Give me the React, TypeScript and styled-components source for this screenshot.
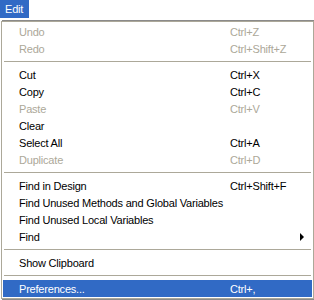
import React from 'react'
import styled, { createGlobalStyle } from 'styled-components'

const GlobalStyle = createGlobalStyle`
  html, body {
    margin: 0;
    padding: 0;
    background: #ffffff;
    overflow: hidden;
  }
  body {
    font-family: "Liberation Sans", Arial, sans-serif;
    font-size: 11px;
    letter-spacing: -0.2px;
  }
`;

const Page = styled.div`
  width: 314px;
  height: 300px;
  display: flex;
  flex-direction: column;
`;

const MenuBar = styled.div`
  display: flex;
  height: 18px;
`;

const BarItem = styled.div`
  height: 18px;
  line-height: 18px;
  padding: 0 5px;
  width: 19px;
  background: #316ac5;
  color: #ffffff;
`;

const Dropdown = styled.div`
  margin: 3px 0 0 1px;
  width: 309px;
  border: 1px solid #aca899;
  padding: 1px 1px;
  background: #ffffff;
  box-shadow: 2px 0 0 #ffffff, 2px 0 0 1px #8a8a8a;
  display: flex;
  flex-direction: column;
`;

const Row = styled.div<{ $disabled?: boolean; $active?: boolean }>`
  display: grid;
  grid-template-columns: 211px 1fr 14px;
  align-items: center;
  height: 17px;
  padding-left: 16px;
  white-space: nowrap;
  color: ${p => (p.$active ? '#ffffff' : p.$disabled ? '#aca899' : '#000000')};
  background: ${p => (p.$active ? '#316ac5' : 'transparent')};
`;

const Label = styled.span`
  overflow: visible;
`;

const Shortcut = styled.span``;

const Arrow = styled.span`
  width: 0;
  height: 0;
  margin-left: 2px;
  border-top: 4px solid transparent;
  border-bottom: 4px solid transparent;
  border-left: 4px solid #000000;
  justify-self: start;
`;

const Separator = styled.div`
  height: 1px;
  margin: 4px 1px 4px 1px;
  background: #aca899;
`;

type Item = { label: string; shortcut?: string; disabled?: boolean; active?: boolean; submenu?: boolean } | 'sep';

const items: Item[] = [
  { label: 'Undo', shortcut: 'Ctrl+Z', disabled: true },
  { label: 'Redo', shortcut: 'Ctrl+Shift+Z', disabled: true },
  'sep',
  { label: 'Cut', shortcut: 'Ctrl+X' },
  { label: 'Copy', shortcut: 'Ctrl+C' },
  { label: 'Paste', shortcut: 'Ctrl+V', disabled: true },
  { label: 'Clear' },
  { label: 'Select All', shortcut: 'Ctrl+A' },
  { label: 'Duplicate', shortcut: 'Ctrl+D', disabled: true },
  'sep',
  { label: 'Find in Design', shortcut: 'Ctrl+Shift+F' },
  { label: 'Find Unused Methods and Global Variables' },
  { label: 'Find Unused Local Variables' },
  { label: 'Find', submenu: true },
  'sep',
  { label: 'Show Clipboard' },
  'sep',
  { label: 'Preferences...', shortcut: 'Ctrl+,', active: true },
];

export default function App() {
  return (
    <Page>
      <GlobalStyle />
      <MenuBar>
        <BarItem>Edit</BarItem>
      </MenuBar>
      <Dropdown>
        {items.map((it, i) =>
          it === 'sep' ? (
            <Separator key={i} />
          ) : (
            <Row key={i} $disabled={it.disabled} $active={it.active}>
              <Label>{it.label}</Label>
              <Shortcut>{it.shortcut ?? ''}</Shortcut>
              {it.submenu ? <Arrow /> : <span />}
            </Row>
          )
        )}
      </Dropdown>
    </Page>
  )
}
